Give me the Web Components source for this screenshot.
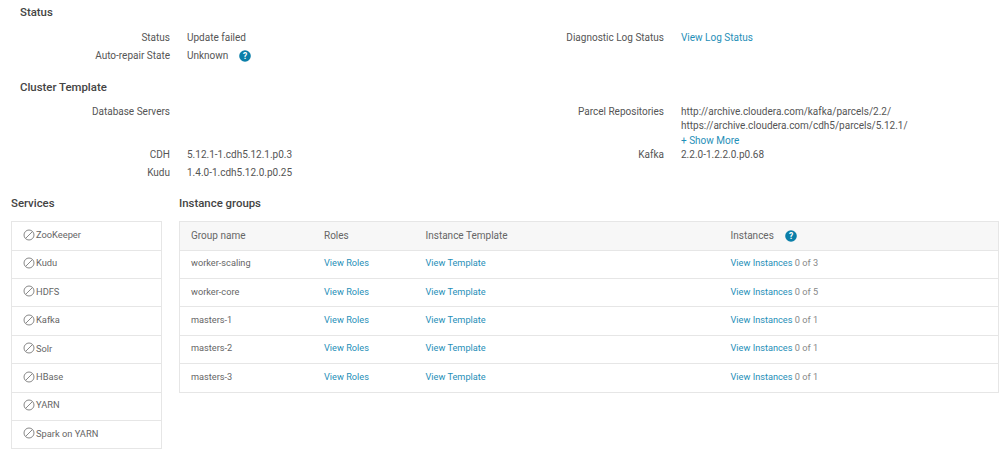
<!DOCTYPE html>
<html>
<head>
<meta charset="utf-8">
<title>Cluster details</title>
<style>
    html, body { margin: 0; background: #fff; }
    body { font-family: Roboto, 'Liberation Sans', sans-serif; font-size: 10px; color: #555; width: 999px; height: 449px; overflow: hidden; }
    a { color: #1f8fb8; text-decoration: none; }
    .stack { display: block; line-height: 14.4px; }
    .groups { display: flex; padding: 12px 0 0 11px; gap: 17px; }
    .groups > service-list { flex: 0 0 151px; }
    .groups > instance-groups { flex: 1; }
</style>
</head>
<body>
<detail-section heading="Status" top="4" pad="11">
    <detail-row label="Status" style="grid-area: 1 / 1">Update failed</detail-row>
    <detail-row label="Auto-repair State" style="grid-area: 2 / 1">Unknown <help-icon gap="8"></help-icon></detail-row>
    <detail-row label="Diagnostic Log Status" style="grid-area: 1 / 2"><a href="#">View Log Status</a></detail-row>
</detail-section>

<detail-section heading="Cluster Template" top="12.6" pad="10">
    <detail-row label="Database Servers" style="grid-area: 1 / 1"></detail-row>
    <detail-row label="Parcel Repositories" style="grid-area: 1 / 2">
        <span class="stack">http://archive.cloudera.com/kafka/parcels/2.2/</span>
        <span class="stack">https://archive.cloudera.com/cdh5/parcels/5.12.1/</span>
        <span class="stack"><a href="#">+ Show More</a></span>
    </detail-row>
    <detail-row label="CDH" style="grid-area: 2 / 1">5.12.1-1.cdh5.12.1.p0.3</detail-row>
    <detail-row label="Kafka" style="grid-area: 2 / 2">2.2.0-1.2.2.0.p0.68</detail-row>
    <detail-row label="Kudu" style="grid-area: 3 / 1">1.4.0-1.cdh5.12.0.p0.25</detail-row>
</detail-section>

<div class="groups">
    <service-list>
        <service-item>ZooKeeper</service-item>
        <service-item>Kudu</service-item>
        <service-item>HDFS</service-item>
        <service-item>Kafka</service-item>
        <service-item>Solr</service-item>
        <service-item>HBase</service-item>
        <service-item>YARN</service-item>
        <service-item>Spark on YARN</service-item>
    </service-list>
    <instance-groups>
        <instance-row group="worker-scaling" done="0 of 3"></instance-row>
        <instance-row group="worker-core" done="0 of 5"></instance-row>
        <instance-row group="masters-1" done="0 of 1"></instance-row>
        <instance-row group="masters-2" done="0 of 1"></instance-row>
        <instance-row group="masters-3" done="0 of 1"></instance-row>
    </instance-groups>
</div>

<script>
const HEADING_CSS = `font-size: 11.4px; font-weight: 500; color: #444; line-height: 16px;`;
const LINK_CSS = `a { color: #1f8fb8; text-decoration: none; }`;

class HelpIcon extends HTMLElement {
    constructor() {
        super();
        this.attachShadow({mode: "open"});
        this.shadowRoot.innerHTML = `
            <style>
                :host { display: inline-block; vertical-align: -3px; margin-left: ${this.getAttribute('gap') || 0}px; width: 12px; height: 12px; }
                svg { display: block; }
                text { font: 700 8.5px Roboto, 'Liberation Sans', sans-serif; fill: #fff; }
            </style>
            <svg width="12" height="12" viewBox="0 0 12 12">
                <circle cx="6" cy="6" r="5.8" fill="#0b7fa9"/>
                <text x="6" y="9" text-anchor="middle">?</text>
            </svg>`;
    }
}
customElements.define('help-icon', HelpIcon);

class DetailSection extends HTMLElement {
    constructor() {
        super();
        this.attachShadow({mode: "open"});
        this.shadowRoot.innerHTML = `
            <style>
                :host { display: block; padding: ${this.getAttribute('top')}px 0 0 20px; }
                h2 { ${HEADING_CSS} margin: 0 0 ${this.getAttribute('pad')}px; }
                .grid { display: grid; grid-template-columns: 494px 1fr; }
            </style>
            <h2>${this.getAttribute('heading')}</h2>
            <div class="grid"><slot></slot></div>`;
    }
}
customElements.define('detail-section', DetailSection);

class DetailRow extends HTMLElement {
    constructor() {
        super();
        this.attachShadow({mode: "open"});
        this.shadowRoot.innerHTML = `
            <style>
                :host { display: grid; grid-template-columns: 150px 1fr; column-gap: 17px; line-height: 14.3px; min-height: 17.6px; }
                .label { text-align: right; }
            </style>
            <div class="label">${this.getAttribute('label')}</div>
            <div><slot></slot></div>`;
    }
}
customElements.define('detail-row', DetailRow);

class ServiceList extends HTMLElement {
    constructor() {
        super();
        this.attachShadow({mode: "open"});
        this.shadowRoot.innerHTML = `
            <style>
                :host { display: block; }
                h2 { ${HEADING_CSS} margin: 0 0 10px; }
                .box { border: 1px solid #e6e6e6; border-bottom: 0; }
            </style>
            <h2>Services</h2>
            <div class="box"><slot></slot></div>`;
    }
}
customElements.define('service-list', ServiceList);

class ServiceItem extends HTMLElement {
    constructor() {
        super();
        this.attachShadow({mode: "open"});
        this.shadowRoot.innerHTML = `
            <style>
                :host { display: flex; align-items: center; gap: 1px; height: 24.8px; padding: 0 0 2.6px 11px; border-bottom: 1px solid #e6e6e6; font-size: 9.3px; color: #666; }
                svg { flex: none; }
            </style>
            <svg width="12" height="12" viewBox="0 0 12 12" fill="none" stroke="#888" stroke-width="1">
                <circle cx="6" cy="6" r="5"/>
                <path d="M2.6 9.4 9.4 2.6"/>
            </svg>
            <span><slot></slot></span>`;
    }
}
customElements.define('service-item', ServiceItem);

const ROW_COLUMNS = `grid-template-columns: 133px 101.5px 305px 1fr;`;

class InstanceGroups extends HTMLElement {
    constructor() {
        super();
        this.attachShadow({mode: "open"});
        this.shadowRoot.innerHTML = `
            <style>
                :host { display: block; }
                h2 { ${HEADING_CSS} margin: 0 0 10px; }
                .table { border: 1px solid #e6e6e6; border-bottom: 0; }
                .head { display: grid; ${ROW_COLUMNS} align-items: center; height: 27.4px; padding-left: 11px; background: #f7f7f7; border-bottom: 1px solid #e6e6e6; color: #666; }
            </style>
            <h2>Instance groups</h2>
            <div class="table">
                <div class="head">
                    <span>Group name</span>
                    <span>Roles</span>
                    <span>Instance Template</span>
                    <span>Instances <help-icon gap="9"></help-icon></span>
                </div>
                <slot></slot>
            </div>`;
    }
}
customElements.define('instance-groups', InstanceGroups);

class InstanceRow extends HTMLElement {
    constructor() {
        super();
        this.attachShadow({mode: "open"});
        this.shadowRoot.innerHTML = `
            <style>
                :host { display: grid; ${ROW_COLUMNS} align-items: center; height: 24.4px; padding: 0 0 3px 11px; border-bottom: 1px solid #e6e6e6; font-size: 9.2px; color: #666; }
                ${LINK_CSS}
                .count { color: #888; }
            </style>
            <span>${this.getAttribute('group')}</span>
            <a href="#">View Roles</a>
            <a href="#">View Template</a>
            <span><a href="#">View Instances</a> <span class="count">${this.getAttribute('done')}</span></span>`;
    }
}
customElements.define('instance-row', InstanceRow);
</script>
</body>
</html>
